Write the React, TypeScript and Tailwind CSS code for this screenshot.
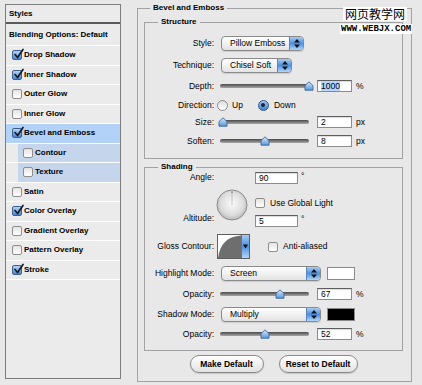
import React from 'react';

type StyleItem = { name: string; checked?: boolean; selected?: boolean; sub?: boolean };

const styleItems: StyleItem[] = [
  { name: 'Drop Shadow', checked: true },
  { name: 'Inner Shadow', checked: true },
  { name: 'Outer Glow' },
  { name: 'Inner Glow' },
  { name: 'Bevel and Emboss', checked: true, selected: true },
  { name: 'Contour', sub: true },
  { name: 'Texture', sub: true },
  { name: 'Satin' },
  { name: 'Color Overlay', checked: true },
  { name: 'Gradient Overlay' },
  { name: 'Pattern Overlay' },
  { name: 'Stroke', checked: true },
];

const CheckBox = ({ checked }: { checked?: boolean }) => (
  <span
    className={`relative block h-[10px] w-[10px] shrink-0 rounded-[2px] border ${
      checked
        ? 'border-[#3b5f8e] bg-linear-to-b from-[#b7d3f3] to-[#4d87cc]'
        : 'border-[#8e8e8e] bg-linear-to-b from-[#e4e4e4] to-white'
    }`}
  >
    {checked && (
      <svg width="12" height="12" viewBox="0 0 12 12" className="absolute -top-[3px] left-[0px]">
        <path d="M2 6.5 L4.6 9.5 L10 1.5" fill="none" stroke="#141c2a" strokeWidth="1.7" strokeLinecap="round" strokeLinejoin="round" />
      </svg>
    )}
  </span>
);

const Radio = ({ on }: { on?: boolean }) =>
  on ? (
    <span className="flex h-[11px] w-[11px] shrink-0 items-center justify-center rounded-full border border-[#2f568c] bg-linear-to-b from-[#a6c9f0] to-[#3f7fcf]">
      <span className="h-[4px] w-[4px] rounded-full bg-[#13243d]" />
    </span>
  ) : (
    <span className="block h-[11px] w-[11px] shrink-0 rounded-full border border-[#8a8a8a] bg-linear-to-b from-[#dedede] to-white" />
  );

const Stepper = () => (
  <svg width="6" height="9" viewBox="0 0 6 9">
    <path d="M3 0 L6 3.4 H0 Z" fill="#111" />
    <path d="M0 5.6 H6 L3 9 Z" fill="#111" />
  </svg>
);

const Select = ({ value, width }: { value: string; width: string }) => (
  <div className={`flex h-[15px] ${width} shrink-0 rounded-[4px] border border-[#8a8a8a] bg-linear-to-b from-white to-[#e3e3e3] shadow-[0_1px_1px_rgba(0,0,0,0.12)]`}>
    <span className="flex-1 pl-[8px] leading-[13px]">{value}</span>
    <span className="flex w-[14px] items-center justify-center rounded-r-[3px] border-l border-[#5b86bd] bg-linear-to-b from-[#a7cbf2] via-[#4c8fdf] to-[#b2d6f7]">
      <Stepper />
    </span>
  </div>
);

const Field = ({ value, width = 'w-[35px]', hl }: { value: string; width?: string; hl?: boolean }) => (
  <div className={`h-[12px] ${width} shrink-0 border border-[#8c8c8c] border-t-[#5e5e5e] bg-white pl-[3px] leading-[10px] shadow-[inset_0_1px_1px_rgba(0,0,0,0.15)]`}>
    <span className={hl ? 'bg-[#b5d5ff]' : ''}>{value}</span>
  </div>
);

const Slider = ({ pos }: { pos: number }) => (
  <div className="relative ml-[6px] h-[10px] w-[89px] shrink-0">
    <div className="absolute left-0 right-0 top-[3px] h-[4px] rounded-full bg-linear-to-b from-[#4a4a4a] to-[#a9a9a9]" />
    <svg width="10" height="10" viewBox="0 0 10 10" className="absolute top-0" style={{ left: pos - 5 }}>
      <defs>
        <linearGradient id="thumb" x1="0" y1="0" x2="0" y2="1">
          <stop offset="0" stopColor="#dcebfb" />
          <stop offset="1" stopColor="#5a96da" />
        </linearGradient>
      </defs>
      <path d="M1 4.6 L5 0.8 L9 4.6 V9.2 H1 Z" fill="url(#thumb)" stroke="#3a67a0" strokeWidth="0.9" />
    </svg>
  </div>
);

const Label = ({ children }: { children: React.ReactNode }) => (
  <span className="w-[69px] shrink-0 text-right">{children}</span>
);

const SliderRow = ({ label, pos, value, unit, h }: { label: string; pos: number; value: string; unit: string; h: string }) => (
  <div className={`flex ${h} items-center`}>
    <Label>{label}</Label>
    <Slider pos={pos} />
    <div className="ml-[8px]">
      <Field value={value} hl={value === '1000'} />
    </div>
    <span className="ml-[4px]">{unit}</span>
  </div>
);

const Button = ({ children, width }: { children: React.ReactNode; width: string }) => (
  <div className={`flex h-[18px] ${width} items-center justify-center rounded-full border border-[#8a8a8a] bg-linear-to-b from-white to-[#e2e2e2] font-bold shadow-[0_1px_1px_rgba(0,0,0,0.15)]`}>
    {children}
  </div>
);

export default function App() {
  return (
    <div className="relative flex h-[385px] w-[422px] items-start overflow-hidden bg-[#e8e8e8] font-['Liberation_Sans',Arial,sans-serif] text-[8.5px] text-black">
      {/* styles list */}
      <aside className="ml-[5px] mt-[4px] h-[375px] w-[116px] shrink-0 border border-[#7d7d7d] bg-[#ebebeb] text-[8px] font-bold">
        <div className="h-[19px] border-b-2 border-[#5a5a5a] pl-[3px] leading-[18px]">Styles</div>
        <div className="h-[22px] border-b border-white pl-[3px] leading-[21px]">Blending Options: Default</div>
        {styleItems.map((item) => (
          <div key={item.name} className="flex h-[19.5px] border-b border-white">
            <div
              className={`flex flex-1 items-center ${
                item.sub ? 'ml-[12px] gap-[2px] bg-[#c5d6ec] pl-[5px]' : 'gap-[2px] pl-[6px]'
              } ${item.selected ? 'bg-[#b3d2f8]' : ''}`}
            >
              <CheckBox checked={item.checked} />
              <span>{item.name}</span>
            </div>
          </div>
        ))}
      </aside>

      {/* bevel and emboss panel */}
      <fieldset className="ml-[16px] mt-[3px] h-[379px] w-[275px] shrink-0 border border-[#a2a2a2] pl-[6px] pr-[8px]">
        <legend className="ml-[6px] px-[3px] text-[8px] font-bold leading-[10px]">Bevel and Emboss</legend>

        <fieldset className="mt-[4px] h-[142px] border border-[#a2a2a2]">
          <legend className="ml-[13px] px-[3px] text-[8px] font-bold leading-[10px]">Structure</legend>
          <div className="pt-[5px]">
            <div className="flex h-[22px] items-center">
              <Label>Style:</Label>
              <div className="ml-[7px]"><Select value="Pillow Emboss" width="w-[83px]" /></div>
            </div>
            <div className="flex h-[22px] items-center">
              <Label>Technique:</Label>
              <div className="ml-[7px]"><Select value="Chisel Soft" width="w-[71px]" /></div>
            </div>
            <SliderRow label="Depth:" pos={89} value="1000" unit="%" h="h-[20px]" />
            <div className="flex h-[18px] items-center">
              <Label>Direction:</Label>
              <div className="ml-[3px] flex items-center">
                <Radio />
                <span className="ml-[4px]">Up</span>
              </div>
              <div className="ml-[15px] flex items-center">
                <Radio on />
                <span className="ml-[5px]">Down</span>
              </div>
            </div>
            <SliderRow label="Size:" pos={3} value="2" unit="px" h="h-[16px]" />
            <SliderRow label="Soften:" pos={45} value="8" unit="px" h="h-[22px]" />
          </div>
        </fieldset>

        <fieldset className="mt-[3px] h-[189px] border border-[#a2a2a2]">
          <legend className="ml-[13px] px-[3px] text-[8px] font-bold leading-[10px]">Shading</legend>

          <div className="flex h-[60px]">
            <div className="flex w-[69px] shrink-0 flex-col text-right">
              <span className="h-[10px] leading-[10px]">Angle:</span>
              <span className="mt-[31px] h-[10px] leading-[10px]">Altitude:</span>
            </div>
            <svg width="32" height="32" viewBox="0 0 32 32" className="ml-[2px] mt-[17px] shrink-0">
              <defs>
                <radialGradient id="dial" cx="0.5" cy="0.45" r="0.55">
                  <stop offset="0" stopColor="#fbfbfb" />
                  <stop offset="0.7" stopColor="#dcdcdc" />
                  <stop offset="1" stopColor="#b9b9b9" />
                </radialGradient>
              </defs>
              <circle cx="16" cy="16" r="15" fill="url(#dial)" stroke="#8b8b8b" strokeWidth="1" />
              <line x1="16" y1="4" x2="16" y2="16" stroke="#b8b8b8" strokeWidth="0.8" />
              <circle cx="16" cy="3.2" r="1" fill="#9a9a9a" />
            </svg>
            <div className="ml-[7px] flex flex-col">
              <div className="flex items-start">
                <Field value="90" width="w-[43px]" />
                <span className="ml-[3px] leading-[8px]">°</span>
              </div>
              <div className="mt-[14px] flex h-[10px] items-center">
                <CheckBox />
                <span className="ml-[5px]">Use Global Light</span>
              </div>
              <div className="mt-[7px] flex items-start">
                <Field value="5" width="w-[43px]" />
                <span className="ml-[3px] leading-[8px]">°</span>
              </div>
            </div>
          </div>

          <div className="mt-[2px] flex h-[25px] items-center">
            <Label>Gloss Contour:</Label>
            <div className="ml-[3px] flex h-[25px] border border-[#5f5f5f]">
              <svg width="23" height="23" viewBox="0 0 23 23" className="bg-white">
                <path d="M0 23 C 2 9, 9 1.5, 23 0.5 V23 Z" fill="#6e6e6e" />
              </svg>
              <span className="flex w-[8px] items-center justify-center border-l border-[#4b79b3] bg-linear-to-b from-[#a7cbf2] via-[#4c8fdf] to-[#b2d6f7]">
                <svg width="5" height="5" viewBox="0 0 5 5">
                  <path d="M0 0.5 H5 L2.5 4.5 Z" fill="#111" />
                </svg>
              </span>
            </div>
            <div className="ml-[18px] flex items-center">
              <CheckBox />
              <span className="ml-[5px]">Anti-aliased</span>
            </div>
          </div>

          <div className="mt-[7px] flex h-[15px] items-center">
            <Label>Highlight Mode:</Label>
            <div className="ml-[7px]"><Select value="Screen" width="w-[100px]" /></div>
            <div className="ml-[6px] h-[13px] w-[28px] border border-[#8a8a8a] bg-white" />
          </div>
          <div className="mt-[3px]">
            <SliderRow label="Opacity:" pos={60} value="67" unit="%" h="h-[20px]" />
          </div>
          <div className="mt-[3px] flex h-[15px] items-center">
            <Label>Shadow Mode:</Label>
            <div className="ml-[7px]"><Select value="Multiply" width="w-[100px]" /></div>
            <div className="ml-[6px] h-[13px] w-[28px] border border-[#8a8a8a] bg-black" />
          </div>
          <div className="mt-[2px]">
            <SliderRow label="Opacity:" pos={45} value="52" unit="%" h="h-[20px]" />
          </div>
        </fieldset>

        <div className="mt-[4px] flex justify-center gap-[15px]">
          <Button width="w-[74px]">Make Default</Button>
          <Button width="w-[79px]">Reset to Default</Button>
        </div>
      </fieldset>

      {/* watermark */}
      <div className="absolute left-[343px] top-[7px] bg-white px-[2px] font-['Noto_Sans_CJK_SC',sans-serif] text-[12px] leading-[14px]">
        网页教学网
      </div>
      <div className="absolute left-[340px] top-[24px] bg-white px-[1px] font-['Liberation_Mono',monospace] text-[9px] font-bold leading-[10px]">
        WWW.WEBJX.COM
      </div>
    </div>
  );
}
